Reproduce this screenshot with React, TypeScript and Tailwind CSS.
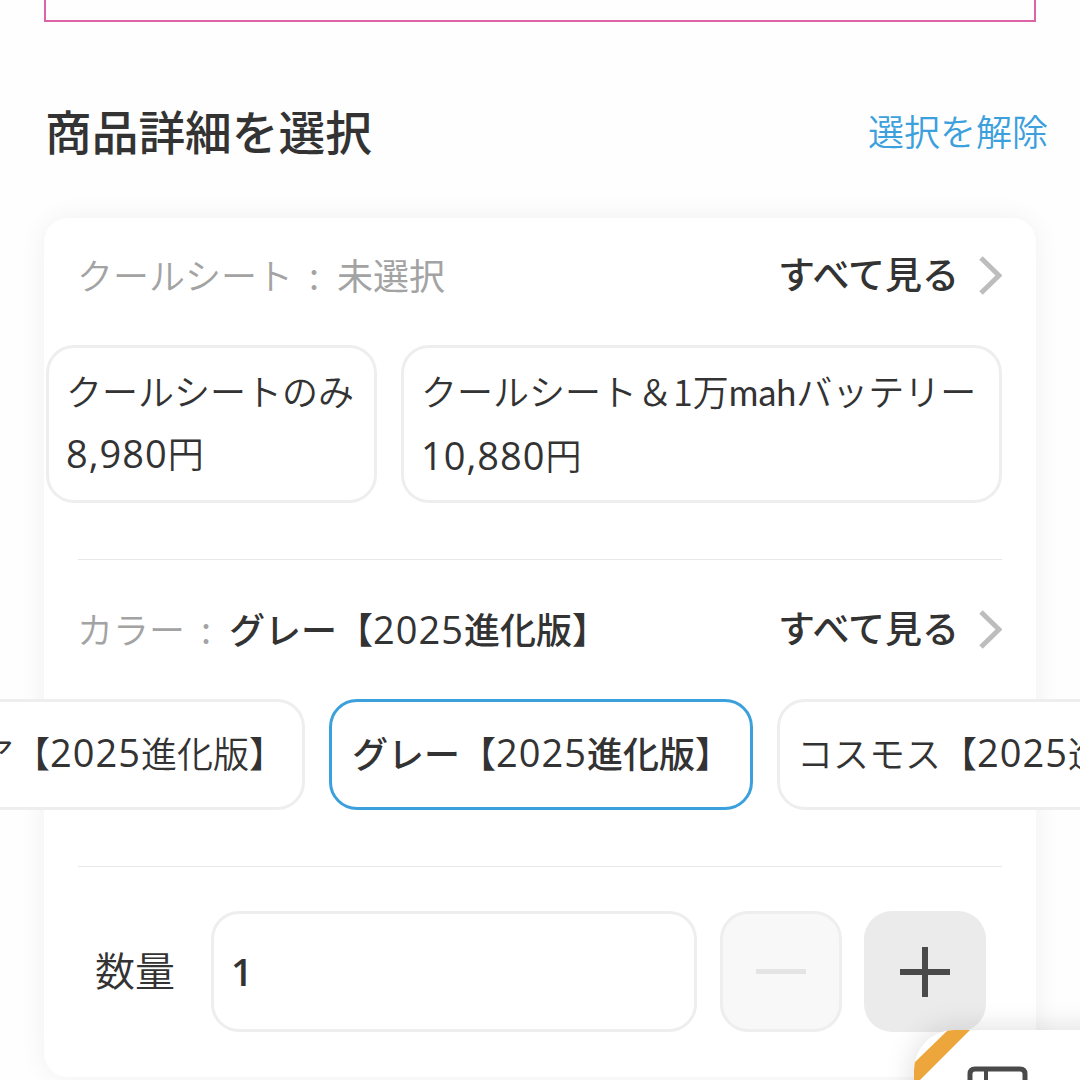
import React from 'react';

const font = '[font-family:"Noto_Sans_CJK_JP","Noto_Sans",sans-serif]';

// digits in the screenshot are wider than the CJK font's own
const Num = ({ children, strong }: { children: React.ReactNode; strong?: boolean }) => (
    <span
        className={
            strong
                ? 'text-[38px] leading-none tracking-[1px] font-medium [font-family:"Open_Sans",sans-serif]'
                : 'text-[38px] leading-none tracking-[1px] font-normal [font-family:"Open_Sans",sans-serif]'
        }
    >
        {children}
    </span>
);

const SeeAll = () => (
    <div className="flex items-center">
        <span className="pb-[4px] text-[37px] font-medium text-[#333]">すべて見る</span>
        <svg width="26" height="40" viewBox="0 0 26 40" className="ml-[17px]">
            <path d="M5 2 L23 19.5 L5 37" fill="none" stroke="#bdbdbd" strokeWidth="5" />
        </svg>
    </div>
);

const Chip = ({ children, selected }: { children: React.ReactNode; selected?: boolean }) => (
    <div
        className={
            selected
                ? 'h-[111px] shrink-0 flex items-center pl-[20px] pr-[19px] pb-[6px] rounded-[28px] border-[3px] border-[#3ca0dc] bg-white font-medium text-[#333] text-[36px] whitespace-nowrap'
                : 'h-[111px] shrink-0 flex items-center px-[17px] pb-[6px] rounded-[28px] border-[3px] border-[#eeeeee] bg-white font-[350] text-[#333] text-[36px] whitespace-nowrap'
        }
    >
        {children}
    </div>
);

const App = () => {
    return (
        <div className={`relative h-[1080px] w-[1080px] overflow-hidden bg-[#fefefe] ${font}`}>
            <div className="mx-[44px] h-[22px] border-x-2 border-b-2 border-[#dd62a6]" />

            <div className="ml-[45px] mr-[32px] mt-[78px] flex h-[66px] items-center justify-between">
                <h2 className="pb-[6px] text-[46.7px] font-medium text-[#333]">商品詳細を選択</h2>
                <button className="pb-[6px] text-[36px] font-[350] text-[#3ca0dc]">選択を解除</button>
            </div>

            <div className="mx-[44px] mt-[52px] h-[859px] rounded-[24px] bg-white pb-[45px] shadow-[0_0_28px_rgba(0,0,0,0.06)]">
                <div className="flex h-[116px] items-center justify-between pl-[33px] pr-[34px]">
                    <div className="flex items-center pb-[4px] text-[36px] text-[#a3a3a3]">
                        <span className="font-[350]">クールシート</span>
                        <span className="ml-[16px] mr-[18px]">:</span>
                        <span>未選択</span>
                    </div>
                    <SeeAll />
                </div>

                <div className="ml-[2px] mt-[11px] flex gap-[24px]">
                    <div className="h-[158px] w-[331px] rounded-[28px] border-[3px] border-[#eeeeee] px-[17px] pt-[11px] text-[36px] font-[350] leading-[63px] text-[#333]">
                        <div className="whitespace-nowrap">クールシートのみ</div>
                        <div className="-mt-[1px]">
                            <Num>8,980</Num>円
                        </div>
                    </div>
                    <div className="h-[158px] w-[601px] rounded-[28px] border-[3px] border-[#eeeeee] px-[17px] pt-[11px] text-[36px] font-[350] leading-[63px] text-[#333]">
                        <div className="whitespace-nowrap">
                            クールシート＆1万<span className='font-normal [font-family:"Lato",sans-serif]'>mah</span>バッテリー
                        </div>
                        <div className="-mt-[1px]">
                            <Num>10,880</Num>円
                        </div>
                    </div>
                </div>

                <div className="ml-[34px] mr-[34px] mt-[56px] h-[1px] bg-[#e8e8e8]" />

                <div className="flex h-[139px] items-center justify-between pl-[33px] pr-[34px]">
                    <div className="flex items-center pb-[4px] text-[36px]">
                        <span className="font-[350] text-[#a3a3a3]">カラー</span>
                        <span className="ml-[16px] mr-[18px] text-[#a3a3a3]">:</span>
                        <span className="font-medium text-[#333]">
                            グレー【<Num strong>2025</Num>進化版】
                        </span>
                    </div>
                    <SeeAll />
                </div>

                <div className="-mx-[44px] flex gap-[24px] overflow-hidden pl-[2px]">
                    <div className="flex min-w-0 flex-1 justify-end">
                        <Chip>
                            アクア【<Num>2025</Num>進化版】
                        </Chip>
                    </div>
                    <Chip selected>
                        グレー【<Num strong>2025</Num>進化版】
                    </Chip>
                    <div className="flex min-w-0 flex-1 justify-start">
                        <Chip>
                            コスモス【<Num>2025</Num>進化版】
                        </Chip>
                    </div>
                </div>

                <div className="ml-[34px] mr-[34px] mt-[56px] h-[1px] bg-[#e8e8e8]" />

                <div className="ml-[51px] mt-[44px] flex items-center">
                    <span className="w-[116px] pb-[6px] text-[40px] font-[350] text-[#333]">数量</span>
                    <div className="flex h-[121px] w-[486px] items-center rounded-[28px] border-[3px] border-[#eeeeee] pb-[2px] pl-[17px] font-semibold text-[#333]">
                        <span className='text-[38px] leading-none font-semibold [font-family:"Open_Sans",sans-serif]'>1</span>
                    </div>
                    <button className="ml-[23px] flex h-[121px] w-[122px] items-center justify-center rounded-[28px] border-[3px] border-[#eeeeee] bg-[#f8f8f8]">
                        <span className="h-[5px] w-[50px] bg-[#e4e4e4]" />
                    </button>
                    <button className="relative ml-[22px] flex h-[121px] w-[122px] items-center justify-center rounded-[28px] bg-[#ebebeb]">
                        <svg width="50" height="50" viewBox="0 0 50 50">
                            <path d="M25 0 V50 M0 25 H50" stroke="#4a4a4a" strokeWidth="6" />
                        </svg>
                    </button>
                </div>
            </div>

            {/* floating button in the corner, cut off by the screen */}
            <div className="absolute left-[914px] top-[1030px] h-[120px] w-[200px] overflow-hidden rounded-tl-[40px] bg-white shadow-[0_0_30px_rgba(0,0,0,0.14)]">
                <svg width="200" height="120" viewBox="0 0 200 120" className="absolute left-0 top-0">
                    <path d="M34 0 H56 L0 56 V33 Z" fill="#eda63c" />
                    <path d="M56 62 V44 Q56 39 61 39 H106 Q111 39 111 44 V62" fill="none" stroke="#4a4a4a" strokeWidth="5" />
                    <path d="M72 38 V50" stroke="#4a4a4a" strokeWidth="4" />
                </svg>
            </div>
        </div>
    );
};

export default App;
